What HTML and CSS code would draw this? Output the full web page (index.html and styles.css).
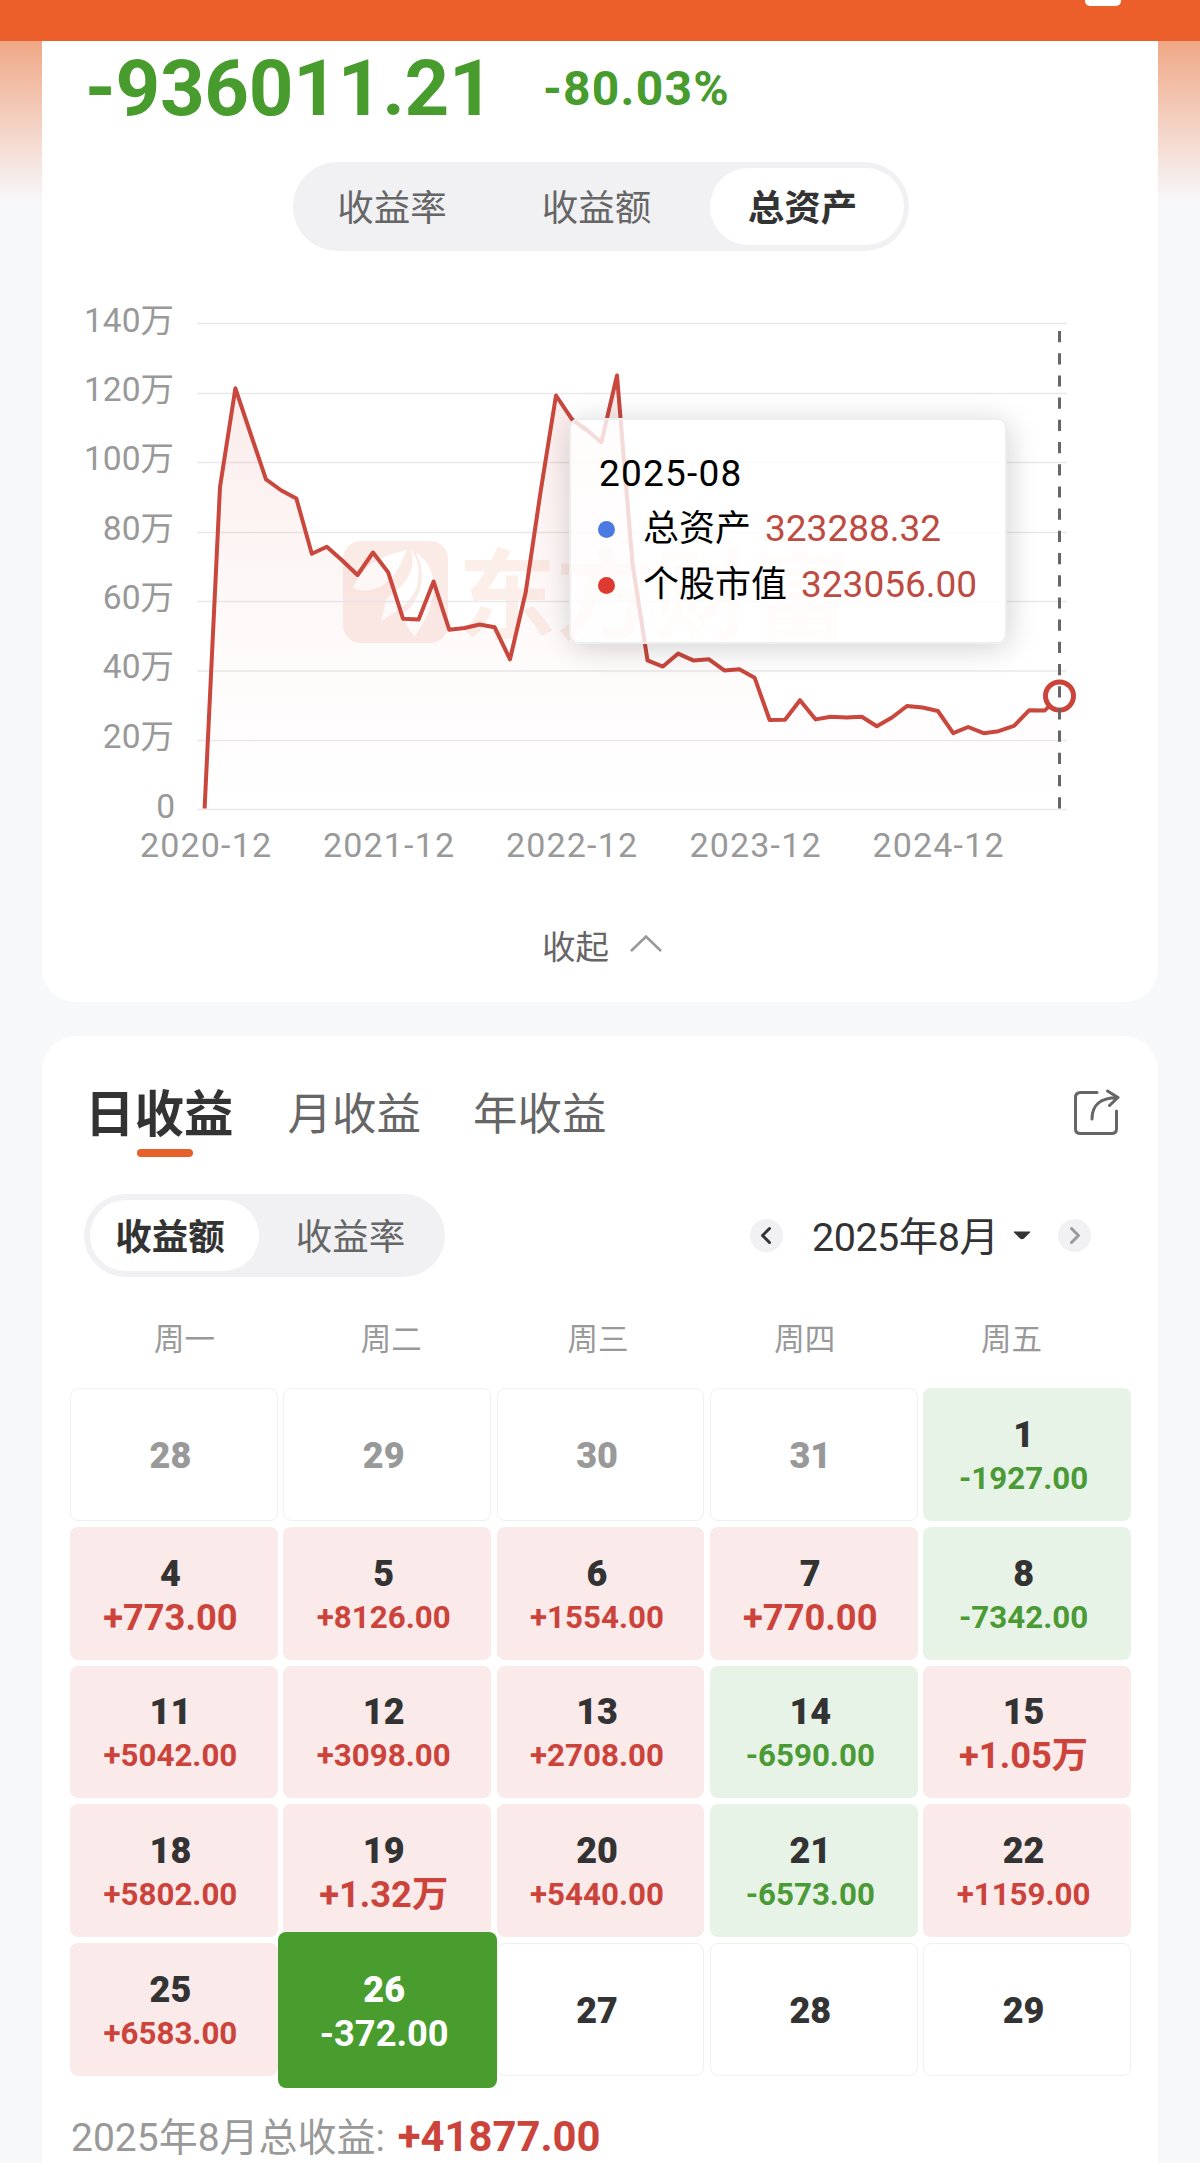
FILE: index.html
```
<!DOCTYPE html>
<html lang="zh-CN">

<head>
    <meta charset="UTF-8">
    <meta name="viewport" content="width=device-width, initial-scale=1.0">
    <title>收益日历</title>
    <link rel="stylesheet" href="styles.css">
</head>

<body>
    <header class="topbar"><span class="topbar-mark"></span></header>

    <main>
        <section class="card card-assets">
            <div class="summary">
                <span class="amount">-936011.21</span>
                <span class="percent">-80.03%</span>
            </div>

            <div class="segment segment-large">
                <span class="segment-item">收益率</span>
                <span class="segment-item">收益额</span>
                <span class="segment-item active">总资产</span>
            </div>

            <div class="chart">
                <svg width="1116" height="590" viewBox="42 290 1116 590">
                    <defs>
                        <linearGradient id="area" x1="0" y1="375" x2="0" y2="809" gradientUnits="userSpaceOnUse">
                            <stop offset="0" stop-color="#d43c33" stop-opacity="0.1" />
                            <stop offset="0.6" stop-color="#d43c33" stop-opacity="0.025" />
                            <stop offset="1" stop-color="#d43c33" stop-opacity="0" />
                        </linearGradient>
                    </defs>

                    <!-- watermark -->
                    <g class="watermark">
                        <rect x="343" y="541" width="105" height="102" rx="18" />
                        <path class="watermark-leaf" d="M353 588C366 559 388 555 407 550C399 565 398 576 380 587C367 593 358 590 353 588Z" />
                        <path class="watermark-leaf" d="M411 550C417 571 406 584 386 599L381 621C394 613 411 604 417 586C420 572 419 560 411 550Z" />
                        <path class="watermark-leaf" d="M416 553C428 560 438 577 432 600C428 620 418 629 415 637C410 631 404 622 402 615C421 602 428 574 416 553Z" />
                        <text x="458" y="631" textLength="392">东方财富</text>
                    </g>

                    <g class="grid-lines">
                        <path d="M197 323.5H1067M197 393.5H1067M197 462.5H1067M197 532.5H1067M197 601.5H1067M197 671H1067M197 740.5H1067M197 809.5H1067" />
                    </g>

                    <g class="axis axis-y">
                        <text x="174" y="332">140万</text>
                        <text x="174" y="401">120万</text>
                        <text x="174" y="470">100万</text>
                        <text x="174" y="540">80万</text>
                        <text x="174" y="609">60万</text>
                        <text x="174" y="678">40万</text>
                        <text x="174" y="748">20万</text>
                        <text x="175" y="818">0</text>
                    </g>

                    <g class="axis axis-x">
                        <text x="205.5" y="857" textLength="131">2020-12</text>
                        <text x="388.5" y="857" textLength="131">2021-12</text>
                        <text x="571.5" y="857" textLength="131">2022-12</text>
                        <text x="755" y="857" textLength="131">2023-12</text>
                        <text x="938" y="857" textLength="131">2024-12</text>
                    </g>

                    <polygon fill="url(#area)" points="204.6,809 220,487 235.4,388 250.5,433.5 266,479.4 281.4,490.5 296.4,498.6 311.8,553.7 326.8,546.8 342,560.2 357.5,575 373,552.5 388.2,572.4 403,618.7 418.6,619.5 433.6,581.6 449.3,629.8 464.6,628 479.6,624.5 494.6,627.2 510,659.3 525.7,592.3 540.7,491 556,394 572,419.4 586.8,430 601.4,442.3 617,375 632.5,563.6 647.5,660.4 662.9,666.6 678.2,653.6 693.2,660.4 709,659.3 724.3,670.4 739.3,669.2 754.6,677.7 769.6,720 785,719.8 800,700.2 815.7,719.4 830.7,716.7 846.4,717.5 861.8,716.7 876.8,726.3 892,717.5 907,706 922.5,707.5 937.9,711 953.2,733.2 968.2,727 983.6,733.2 998.6,731.2 1014,725.9 1029.3,710.2 1044.6,710.6 1059.6,696.4 1059.6,809" />
                    <polyline class="line" points="204.6,808.5 220,487 235.4,388.3 250.5,433.5 266,479.4 281.4,490.5 296.4,498.6 311.8,553.7 326.8,546.8 342,560.2 357.5,575 373,552.5 388.2,572.4 403,618.7 418.6,619.5 433.6,581.6 449.3,629.8 464.6,628 479.6,624.5 494.6,627.2 510,659.3 525.7,592.3 540.7,491 556,395.5 572,419.4 586.8,430 601.4,442.3 617,375.5 632.5,563.6 647.5,660.4 662.9,666.6 678.2,653.6 693.2,660.4 709,659.3 724.3,670.4 739.3,669.2 754.6,677.7 769.6,720 785,719.8 800,700.2 815.7,719.4 830.7,716.7 846.4,717.5 861.8,716.7 876.8,726.3 892,717.5 907,706 922.5,707.5 937.9,711 953.2,733.2 968.2,727 983.6,733.2 998.6,731.2 1014,725.9 1029.3,710.2 1044.6,710.6 1059.6,696.4" />
                    <circle class="marker" cx="1059.5" cy="696" r="14" />
                    <path class="cursor" d="M1059.5 331V809" />
                </svg>

                <div class="tooltip">
                    <div class="tooltip-date">2025-08</div>
                    <div class="tooltip-row">
                        <i class="dot dot-blue"></i>
                        <span>总资产</span>
                        <span class="tooltip-value">323288.32</span>
                    </div>
                    <div class="tooltip-row">
                        <i class="dot dot-red"></i>
                        <span>个股市值</span>
                        <span class="tooltip-value">323056.00</span>
                    </div>
                </div>
            </div>

            <div class="collapse">
                <span>收起</span>
                <svg width="34" height="20" viewBox="0 0 34 20">
                    <path d="M2 17L17 2.500L32 17" fill="none" stroke="#999" stroke-width="2.600" />
                </svg>
            </div>
        </section>

        <section class="card card-calendar">
            <div class="tabs">
                <span class="tab active">日收益</span>
                <span class="tab">月收益</span>
                <span class="tab">年收益</span>
                <svg class="share" width="48" height="48" viewBox="0 0 48 48">
                    <path d="M24 3.500H7.500Q2.500 3.500 2.500 8.500V40Q2.500 44.500 7.500 44.500H38.500Q43.500 44.500 43.500 40V22" />
                    <path d="M19 30C19 15 28 9 44 8.500M34.500 2L45 8.500L36.500 16.500" />
                </svg>
            </div>

            <div class="controls">
                <div class="segment segment-small">
                    <span class="segment-item active">收益额</span>
                    <span class="segment-item">收益率</span>
                </div>
                <div class="month">
                    <span class="arrow">
                        <svg width="33" height="33" viewBox="0 0 33 33"><path d="M19.500 9.500L12.500 16.500L19.500 23.500" stroke="#333" /></svg>
                    </span>
                    <span class="month-label">2025年8月</span>
                    <svg class="caret" width="18" height="9" viewBox="0 0 18 9">
                        <path d="M1 0.500H17Q17.500 1 17 1.500L11 7.500Q9 9 7 7.500L1 1.500Q0.500 1 1 0.500Z" fill="#333" />
                    </svg>
                    <span class="arrow">
                        <svg width="33" height="33" viewBox="0 0 33 33"><path d="M13.500 9.500L20.500 16.500L13.500 23.500" stroke="#999" /></svg>
                    </span>
                </div>
            </div>

            <div class="weekdays">
                <span>周一</span>
                <span>周二</span>
                <span>周三</span>
                <span>周四</span>
                <span>周五</span>
            </div>

            <div class="days">
                <div class="day muted"><b>28</b></div>
                <div class="day muted"><b>29</b></div>
                <div class="day muted"><b>30</b></div>
                <div class="day muted"><b>31</b></div>
                <div class="day loss"><b>1</b><span>-1927.00</span></div>

                <div class="day gain short"><b>4</b><span>+773.00</span></div>
                <div class="day gain"><b>5</b><span>+8126.00</span></div>
                <div class="day gain"><b>6</b><span>+1554.00</span></div>
                <div class="day gain short"><b>7</b><span>+770.00</span></div>
                <div class="day loss"><b>8</b><span>-7342.00</span></div>

                <div class="day gain"><b>11</b><span>+5042.00</span></div>
                <div class="day gain"><b>12</b><span>+3098.00</span></div>
                <div class="day gain"><b>13</b><span>+2708.00</span></div>
                <div class="day loss"><b>14</b><span>-6590.00</span></div>
                <div class="day gain short"><b>15</b><span>+1.05万</span></div>

                <div class="day gain"><b>18</b><span>+5802.00</span></div>
                <div class="day gain short"><b>19</b><span>+1.32万</span></div>
                <div class="day gain"><b>20</b><span>+5440.00</span></div>
                <div class="day loss"><b>21</b><span>-6573.00</span></div>
                <div class="day gain"><b>22</b><span>+1159.00</span></div>

                <div class="day gain"><b>25</b><span>+6583.00</span></div>
                <div class="day today short"><b>26</b><span>-372.00</span></div>
                <div class="day"><b>27</b></div>
                <div class="day"><b>28</b></div>
                <div class="day"><b>29</b></div>
            </div>

            <div class="total">2025年8月总收益: <b>+41877.00</b></div>
        </section>
    </main>
</body>

</html>
```

FILE: styles.css
```
* {
    box-sizing: border-box;
}

body {
    margin: 0;
    height: 2163px;
    overflow: hidden;
    background-color: #f7f8fa;
    font-family: Roboto, "Noto Sans CJK SC", sans-serif;
    color: #333;
    white-space: nowrap;
}

.topbar {
    height: 41px;
    padding-right: 79px;
    background-color: #ec5f2b;
    display: flex;
    justify-content: flex-end;
}

.topbar-mark {
    width: 36px;
    height: 6px;
    border-radius: 0 0 5px 5px;
    background-color: white;
}

main {
    padding: 0 42px;
    background: linear-gradient(#f0a886, #f7f8fa 160px);
}

.card {
    background-color: white;
    border-radius: 34px;
}

.card-assets {
    height: 961px;
    border-radius: 0 0 34px 34px;
}

.summary {
    height: 121px;
    padding: 0 0 25px 43px;
    display: flex;
    align-items: center;
    color: #489c2e;
    font-weight: bold;
}

.amount {
    width: 458px;
    font-size: 78px;
    letter-spacing: -0.300px;
    line-height: 92px;
}

.percent {
    font-size: 48px;
    letter-spacing: 1.200px;
    line-height: 92px;
}

/* pill switches */
.segment {
    display: flex;
    background-color: #f1f1f4;
    border-radius: 45px;
    font-size: 36.500px;
    color: #666;
}

.segment-item {
    display: flex;
    align-items: center;
    justify-content: center;
    padding-bottom: 2px;
    border-radius: 40px;
}

.segment-item.active {
    padding-right: 9px;
    background-color: white;
    color: #333;
    font-weight: bold;
}

.segment-large {
    width: 616px;
    height: 89px;
    margin: 0 auto 39px 251px;
    padding: 6px 5px 6px 0;
}

.segment-large .segment-item {
    width: 211px;
}

.segment-large .segment-item:first-child {
    width: 198px;
}

.segment-large .segment-item.active {
    width: 194px;
    margin-left: 8px;
}

.segment-small {
    width: 361px;
    height: 83px;
    padding: 6px;
}

.segment-small .segment-item {
    width: 169px;
}

.segment-small .segment-item + .segment-item {
    margin-left: 7px;
}

/* chart */
.chart {
    position: relative;
    height: 590px;
}

.chart svg {
    display: block;
}

.grid-lines path {
    stroke: #e9e9ec;
    stroke-width: 1.500;
}

.axis text {
    font-size: 34px;
    fill: #999;
}

.axis-y text {
    text-anchor: end;
    font-size: 33.500px;
}

.axis-x text {
    text-anchor: middle;
}

.line {
    fill: none;
    stroke: #c9473d;
    stroke-width: 4;
    stroke-linejoin: round;
}

.marker {
    fill: white;
    stroke: #cb433a;
    stroke-width: 5;
}

.cursor {
    stroke: #666;
    stroke-width: 3;
    stroke-dasharray: 11.200 11;
}

.watermark {
    fill: #fbebe7;
}

.watermark-leaf {
    fill: white;
}

.watermark text {
    font-size: 98px;
    font-weight: bold;
    fill: #fcefe9;
}

.tooltip {
    position: absolute;
    left: 527px;
    top: 128px;
    width: 438px;
    height: 226px;
    padding: 27px 27px;
    border: 2px solid #eeeeef;
    border-radius: 10px;
    background-color: rgba(255, 255, 255, 0.8);
    box-shadow: 2px 4px 30px rgba(0, 0, 0, 0.18);
    color: black;
    font-size: 36px;
    line-height: 56px;
}

.tooltip-date {
    padding-left: 1px;
    font-size: 37px;
    letter-spacing: 1.200px;
    line-height: 54px;
}

.tooltip-row {
    display: flex;
    align-items: center;
}

.dot {
    width: 17px;
    height: 17px;
    margin-right: 28px;
    border-radius: 50%;
}

.dot-blue {
    background-color: #4b7be2;
}

.dot-red {
    background-color: #dd3b31;
}

.tooltip-value {
    margin-left: 14px;
    color: #bd4b42;
    font-size: 37px;
}

.collapse {
    height: 122px;
    padding: 6px 0 0 500px;
    display: flex;
    align-items: center;
    gap: 20px;
    color: #666;
    font-size: 33.500px;
}

/* calendar card */
.card-calendar {
    height: 1160px;
    margin-top: 34px;
}

.tabs {
    height: 158px;
    padding: 49px 37px 0 43px;
    display: flex;
    align-items: flex-start;
    font-size: 44.500px;
    line-height: 60px;
    color: #666;
}

.tab {
    margin-right: 52px;
}

.tab.active {
    position: relative;
    margin-right: 54px;
    color: #333;
    font-size: 49.500px;
    font-weight: bold;
}

.tab.active::after {
    content: "";
    position: absolute;
    left: 52px;
    top: 64px;
    width: 56px;
    height: 8px;
    border-radius: 4px;
    background-color: #e8602c;
}

.share {
    margin: 4px 0 0 auto;
    fill: none;
    stroke: #666;
    stroke-width: 3;
    stroke-linecap: round;
    stroke-linejoin: round;
}

.controls {
    height: 83px;
    padding: 0 67px 0 42px;
    display: flex;
    justify-content: space-between;
    align-items: center;
}

.month {
    display: flex;
    align-items: center;
}

.month-label {
    margin-left: 29px;
    padding-bottom: 4px;
    width: 185px;
    font-size: 39.500px;
    letter-spacing: -0.500px;
}

.caret {
    margin: 0 27px 0 16px;
}

.arrow {
    width: 33px;
    height: 33px;
    border-radius: 50%;
    background-color: #f1f1f4;
}

.arrow svg {
    display: block;
    fill: none;
    stroke-width: 3;
    stroke-linecap: round;
    stroke-linejoin: round;
}

.weekdays {
    height: 111px;
    padding: 8px 43px 0 39px;
    display: grid;
    grid-template-columns: repeat(5, 1fr);
    align-items: center;
    text-align: center;
    font-size: 30.500px;
    color: #999;
}

.days {
    width: 1061px;
    margin-left: 28px;
    display: grid;
    grid-template-columns: repeat(5, 1fr);
    grid-auto-rows: 132.750px;
    gap: 6px 5.500px;
}

.day {
    padding: 4px 7px 0 0;
    border: 1.500px solid #f0f0f0;
    border-radius: 8px;
    display: flex;
    flex-direction: column;
    align-items: center;
    justify-content: center;
    font-size: 31.300px;
    font-weight: bold;
}

.day b {
    font-size: 36px;
    line-height: 44px;
}

.day span {
    line-height: 44px;
}

.day.short {
    font-size: 36.300px;
}

.day.muted {
    color: #999;
}

.day.gain,
.day.loss,
.day.today {
    border: none;
}

.day.loss,
.day.gain {
    padding-top: 5px;
}

.gain {
    background-color: #faeaea;
}

.gain span,
.total b {
    color: #cb433a;
}

.loss {
    background-color: #e8f3e7;
}

.loss span {
    color: #4a9a35;
}

.today {
    position: relative;
    z-index: 1;
    margin: -11px -6px -12px -5px;
    background-color: #489d2e;
    color: white;
}

.total {
    margin: 38px 0 0 29px;
    font-size: 39px;
    line-height: 46px;
    color: #999;
}

.total b {
    margin-left: 3px;
    font-size: 41.800px;
}
```
